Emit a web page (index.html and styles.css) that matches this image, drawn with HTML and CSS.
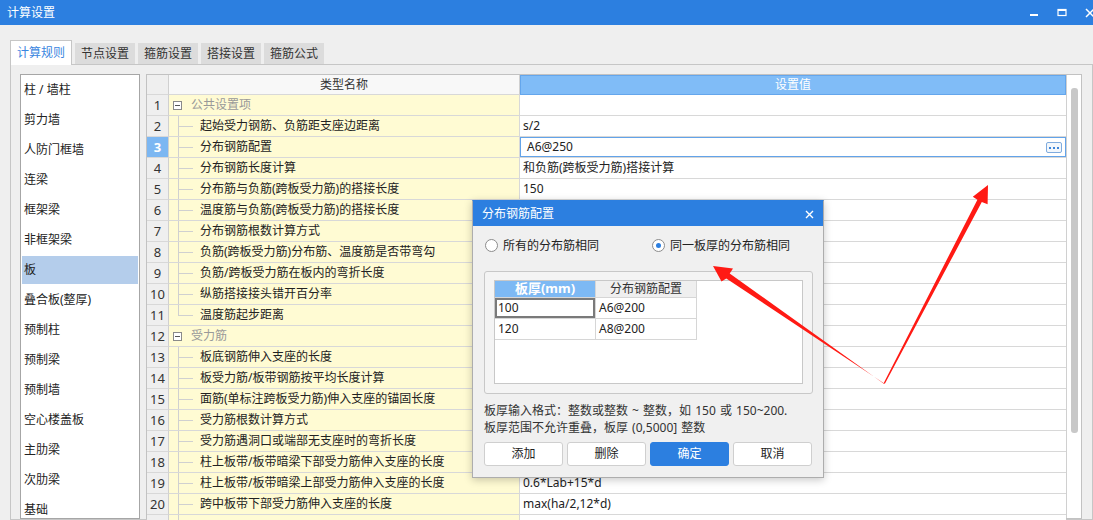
FILE: index.html
```html
<!DOCTYPE html>
<html lang="zh-CN">
<head>
<meta charset="utf-8">
<title>计算设置</title>
<link rel="stylesheet" href="styles.css">
</head>
<body>
<div class="window">
  <div class="titlebar">
    <span class="title">计算设置</span>
    <div class="winctl">
      <div class="winbtn"><svg width="10" height="10" viewBox="0 0 10 10"><rect x="1" y="6" width="8" height="2" fill="#fff"/></svg></div>
      <div class="winbtn"><svg width="10" height="10" viewBox="0 0 10 10"><rect x="1" y="1.5" width="8" height="6" fill="none" stroke="#fff" stroke-width="1.2"/><rect x="1" y="1" width="8" height="2" fill="#fff"/></svg></div>
      <div class="winbtn"><svg width="10" height="10" viewBox="0 0 10 10"><path d="M1 1 L9 9 M9 1 L1 9" stroke="#fff" stroke-width="1.5"/></svg></div>
    </div>
  </div>
  <div class="main">
    <div class="tabs">
      <div class="tab active">计算规则</div>
      <div class="tab">节点设置</div>
      <div class="tab">箍筋设置</div>
      <div class="tab">搭接设置</div>
      <div class="tab">箍筋公式</div>
    </div>
    <div class="panel">
      <ul class="cat-list">
        <li>柱 / 墙柱</li>
        <li>剪力墙</li>
        <li>人防门框墙</li>
        <li>连梁</li>
        <li>框架梁</li>
        <li>非框架梁</li>
        <li class="sel">板</li>
        <li>叠合板(整厚)</li>
        <li>预制柱</li>
        <li>预制梁</li>
        <li>预制墙</li>
        <li>空心楼盖板</li>
        <li>主肋梁</li>
        <li>次肋梁</li>
        <li>基础</li>
      </ul>
      <div class="grid">
        <div class="grid-body">
          <div class="row head">
            <div class="c-num"></div>
            <div class="c-hname">类型名称</div>
            <div class="c-hval">设置值</div>
          </div>
          <div class="row"><div class="c-num">1</div><div class="c-name group"><span class="box"></span><span class="gtext">公共设置项</span></div><div class="c-val"></div></div>
          <div class="row"><div class="c-num">2</div><div class="c-name child">起始受力钢筋、负筋距支座边距离</div><div class="c-val">s/2</div></div>
          <div class="row"><div class="c-num cur">3</div><div class="c-name child">分布钢筋配置</div><div class="c-val edit"><span>A6@250</span><span class="more"><i></i><i></i><i></i></span></div></div>
          <div class="row"><div class="c-num">4</div><div class="c-name child">分布钢筋长度计算</div><div class="c-val">和负筋(跨板受力筋)搭接计算</div></div>
          <div class="row"><div class="c-num">5</div><div class="c-name child">分布筋与负筋(跨板受力筋)的搭接长度</div><div class="c-val">150</div></div>
          <div class="row"><div class="c-num">6</div><div class="c-name child">温度筋与负筋(跨板受力筋)的搭接长度</div><div class="c-val"></div></div>
          <div class="row"><div class="c-num">7</div><div class="c-name child">分布钢筋根数计算方式</div><div class="c-val"></div></div>
          <div class="row"><div class="c-num">8</div><div class="c-name child">负筋(跨板受力筋)分布筋、温度筋是否带弯勾</div><div class="c-val"></div></div>
          <div class="row"><div class="c-num">9</div><div class="c-name child">负筋/跨板受力筋在板内的弯折长度</div><div class="c-val"></div></div>
          <div class="row"><div class="c-num">10</div><div class="c-name child">纵筋搭接接头错开百分率</div><div class="c-val"></div></div>
          <div class="row"><div class="c-num">11</div><div class="c-name child last">温度筋起步距离</div><div class="c-val"></div></div>
          <div class="row"><div class="c-num">12</div><div class="c-name group"><span class="box"></span><span class="gtext">受力筋</span></div><div class="c-val"></div></div>
          <div class="row"><div class="c-num">13</div><div class="c-name child">板底钢筋伸入支座的长度</div><div class="c-val"></div></div>
          <div class="row"><div class="c-num">14</div><div class="c-name child">板受力筋/板带钢筋按平均长度计算</div><div class="c-val"></div></div>
          <div class="row"><div class="c-num">15</div><div class="c-name child">面筋(单标注跨板受力筋)伸入支座的锚固长度</div><div class="c-val"></div></div>
          <div class="row"><div class="c-num">16</div><div class="c-name child">受力筋根数计算方式</div><div class="c-val"></div></div>
          <div class="row"><div class="c-num">17</div><div class="c-name child">受力筋遇洞口或端部无支座时的弯折长度</div><div class="c-val"></div></div>
          <div class="row"><div class="c-num">18</div><div class="c-name child">柱上板带/板带暗梁下部受力筋伸入支座的长度</div><div class="c-val"></div></div>
          <div class="row"><div class="c-num">19</div><div class="c-name child">柱上板带/板带暗梁上部受力筋伸入支座的长度</div><div class="c-val">0.6*Lab+15*d</div></div>
          <div class="row"><div class="c-num">20</div><div class="c-name child">跨中板带下部受力筋伸入支座的长度</div><div class="c-val">max(ha/2,12*d)</div></div>
          <div class="row"><div class="c-num"></div><div class="c-name child"></div><div class="c-val"></div></div>
        </div>
        <div class="vscroll"><div class="thumb"></div></div>
      </div>
    </div>
  </div>

  <div class="dialog">
    <div class="dlg-title"><span>分布钢筋配置</span><svg class="dlg-close" width="9" height="9" viewBox="0 0 9 9"><path d="M1 1 L8 8 M8 1 L1 8" stroke="#fff" stroke-width="1.4"/></svg></div>
    <div class="dlg-body">
      <div class="radios">
        <label class="opt opt1"><span class="radio"></span>所有的分布筋相同</label>
        <label class="opt"><span class="radio on"></span>同一板厚的分布筋相同</label>
      </div>
      <div class="groupbox">
        <div class="subgrid">
          <div class="srow shead"><div class="s1">板厚(mm)</div><div class="s2">分布钢筋配置</div></div>
          <div class="srow"><div class="s1 focus">100</div><div class="s2">A6@200</div></div>
          <div class="srow"><div class="s1">120</div><div class="s2">A8@200</div></div>
        </div>
      </div>
      <p class="hint">板厚输入格式：整数或整数 ~ 整数，如 150 或 150~200.<br>板厚范围不允许重叠，板厚 (0,5000] 整数</p>
      <div class="btns">
        <button class="btn">添加</button>
        <button class="btn">删除</button>
        <button class="btn primary">确定</button>
        <button class="btn">取消</button>
      </div>
    </div>
  </div>

  <svg class="arrows" width="1093" height="520" viewBox="0 0 1093 520">
    <polygon fill="#ff1a14" points="883.5,383.5 729.7,273.5 733,268.5 713,266 721.5,281.5 726.3,278.5 885,384"/>
    <polygon fill="#ff1a14" points="883.5,383.5 977.4,199.7 972.8,196.8 988,185 987.6,204.2 981.8,202.1 885,383.5"/>
  </svg>
</div>
</body>
</html>
```

FILE: styles.css
```css
* { box-sizing: border-box; margin: 0; padding: 0; }
html, body { width: 1093px; height: 520px; overflow: hidden; }
body {
  font-family: "Noto Sans", "Noto Sans CJK SC", sans-serif;
  font-size: 12px;
  line-height: 1.2;
  color: #222;
  background: #efefef;
}
.window {
  position: relative;
  width: 1093px;
  height: 520px;
  display: flex;
  flex-direction: column;
  overflow: hidden;
}
.titlebar {
  height: 25px;
  flex: none;
  background: #2c7fe0;
  color: #fff;
  display: flex;
  align-items: center;
  padding-left: 7px;
  overflow: hidden;
}
.title { padding-top: 1px; }
.winctl { margin-left: auto; display: flex; margin-right: -11px; }
.winbtn { width: 28px; height: 25px; display: flex; align-items: center; justify-content: center; }

.main {
  flex: 1;
  min-height: 0;
  display: flex;
  flex-direction: column;
  padding: 15px 0 0 10px;
}
.tabs {
  display: flex;
  align-items: flex-end;
  gap: 3px;
  height: 25px;
  flex: none;
  margin-bottom: -1px;
  position: relative;
  z-index: 1;
}
.tab {
  width: 60px;
  height: 21px;
  margin-bottom: 1px;
  padding-top: 1px;
  background: #dcdcdc;
  color: #333;
  display: flex;
  align-items: center;
  justify-content: center;
}
.tab.active {
  width: 62px;
  height: 25px;
  margin-bottom: 0;
  background: #fff;
  border: 1px solid #c6c6c6;
  border-bottom: none;
  color: #3a86e0;
}
.panel {
  flex: 1;
  min-height: 0;
  width: 1083px;
  border: 1px solid #c6c6c6;
  display: flex;
  align-items: stretch;
  gap: 6px;
  padding: 9px 0 0 9px;
}
.cat-list {
  width: 120px;
  flex: none;
  list-style: none;
  background: #fff;
  border: 1px solid #a6a6a6;
  display: flex;
  flex-direction: column;
}
.cat-list li {
  height: 28px;
  margin: 1px;
  padding: 1px 0 0 2px;
  display: flex;
  align-items: center;
  flex: none;
}
.cat-list li.sel { background: #b4cdeb; }

.grid {
  width: 936px;
  flex: none;
  border: 1px solid #c2c2c2;
  background: #fff;
  display: flex;
}
.grid-body { flex: 1; min-width: 0; }
.row {
  display: grid;
  grid-template-columns: 22px 351px 546px;
  height: 21px;
}
.row > div {
  border-bottom: 1px solid #d8d8d8;
  display: flex;
  align-items: center;
  white-space: nowrap;
  overflow: hidden;
  padding-top: 1px;
}
.row.head { height: 20px; }
.c-num {
  background: #efefef;
  border-right: 1px solid #d0d0d0;
  justify-content: center;
  font-size: 13px;
  color: #333;
}
.c-num.cur { background: #7cb7f2; color: #fff; font-weight: bold; }
.c-hname {
  background: #f8f8f8;
  border-right: 1px solid #d0d0d0;
  justify-content: center;
  color: #333;
}
.row.head > .c-hval {
  background: #80bcf7;
  border: 1px solid #64a6ec;
  justify-content: center;
  color: #fff;
}
.c-name {
  background: #fffbd3;
  border-right: 1px solid #d8d8d8;
}
.c-name.child {
  padding-left: 31px;
  background:
    linear-gradient(#d0d0d0, #d0d0d0) 9px 0 / 1px 100% no-repeat,
    linear-gradient(#d0d0d0, #d0d0d0) 9px 50% / 15px 1px no-repeat,
    #fffbd3;
}
.c-name.child.last {
  background:
    linear-gradient(#d0d0d0, #d0d0d0) 9px 0 / 1px 50% no-repeat,
    linear-gradient(#d0d0d0, #d0d0d0) 9px 50% / 15px 1px no-repeat,
    #fffbd3;
}
.row > .c-name.group { padding-left: 4px; padding-top: 0; }
.box {
  width: 9px;
  height: 9px;
  border: 1px solid #8a8a8a;
  background: #fff linear-gradient(#555, #555) center / 5px 1px no-repeat;
  flex: none;
}
.gtext { margin-left: 9px; color: #999; padding-top: 1px; }
.c-val { padding-left: 3px; background: #fff; }
.row > .c-val.edit {
  box-shadow: inset 0 0 0 1px #62a3e9;
  padding-left: 7px;
  padding-right: 4px;
}
.more {
  margin-left: auto;
  width: 16px;
  height: 11px;
  border: 1px solid #7fabde;
  border-radius: 2px;
  background: #f2f7fc;
  display: flex;
  align-items: center;
  justify-content: center;
  gap: 2px;
}
.more i { width: 2px; height: 2px; background: #3d84d8; display: block; }

.vscroll {
  width: 15px;
  flex: none;
  border-left: 1px solid #d0d0d0;
  background: #fff;
}
.thumb {
  width: 7px;
  height: 345px;
  margin: 13px 0 0 4px;
  background: #c8c8c8;
  border-radius: 3px;
}

/* dialog */
.dialog {
  position: absolute;
  left: 472px;
  top: 200px;
  width: 352px;
  height: 278px;
  background: #f0f0f0;
  border: 1px solid #adadad;
  border-top-color: #2c7fe0;
  box-shadow: 0 2px 8px rgba(0, 0, 0, 0.22);
  z-index: 5;
}
.dlg-title {
  height: 25px;
  background: #2c7fe0;
  color: #fff;
  display: flex;
  align-items: center;
  padding: 1px 9px 0 9px;
}
.dlg-close { margin-left: auto; }
.dlg-body { padding: 10px 10px 0 11px; }
.radios { height: 20px; display: flex; align-items: center; color: #222; }
.opt { display: flex; align-items: center; }
.opt1 { width: 167px; }
.radio {
  width: 13px;
  height: 13px;
  border: 1px solid #8c8c8c;
  border-radius: 50%;
  background: #fff;
  margin: 0 5px 0 1px;
  flex: none;
  display: flex;
  align-items: center;
  justify-content: center;
}
.radio.on::after {
  content: "";
  width: 5px;
  height: 5px;
  border-radius: 50%;
  background: #2c7fe0;
}
.groupbox {
  margin-top: 15px;
  width: 329px;
  height: 123px;
  border: 1px solid #c8c8c8;
  border-radius: 3px;
  background: #f4f4f4;
  padding: 8px 9px 9px 9px;
}
.subgrid {
  width: 309px;
  height: 104px;
  border: 1px solid #c8c8c8;
  background: #fff;
}
.srow { display: flex; height: 21px; }
.srow > div {
  border-right: 1px solid #d6d6d6;
  border-bottom: 1px solid #d6d6d6;
  display: flex;
  align-items: center;
  padding: 1px 0 0 3px;
  color: #222;
}
.srow .s1 { width: 101px; }
.srow .s2 { width: 101px; }
.srow.shead { height: 17px; }
.shead .s1 {
  background: #7db9f4;
  color: #fff;
  font-weight: bold;
  justify-content: center;
  padding: 0;
  font-size: 13px;
}
.shead .s2 { background: #efefef; justify-content: center; padding: 0; color: #333; }
.s1.focus { box-shadow: inset 0 0 0 2px #7a7a7a; }
.hint { margin-top: 8px; margin-bottom: -1px; line-height: 17px; color: #333; white-space: nowrap; word-spacing: 1px; }
.btns { margin-top: 7px; display: flex; gap: 4px; }
.btn {
  width: 79px;
  height: 24px;
  padding-top: 1px;
  font: inherit;
  color: #222;
  background: #fff;
  border: 1px solid #cfcfcf;
  border-radius: 3px;
}
.btn.primary { background: #2c7fe0; border-color: #2c7fe0; color: #fff; }

.arrows {
  position: absolute;
  left: 0;
  top: 0;
  z-index: 10;
  pointer-events: none;
}
```
